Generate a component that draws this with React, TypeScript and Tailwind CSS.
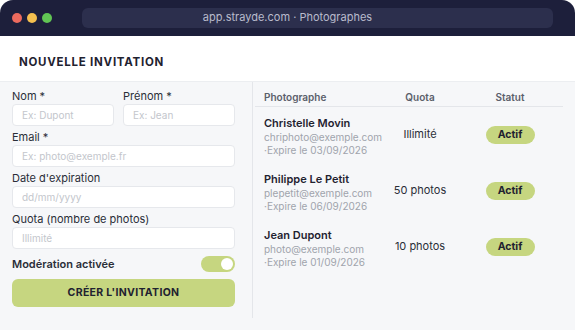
import React from "react";

const rows = [
  { name: "Christelle Movin", email: "chriphoto@exemple.com", exp: "·Expire le 03/09/2026", quota: "Illimité" },
  { name: "Philippe Le Petit", email: "plepetit@exemple.com", exp: "·Expire le 06/09/2026", quota: "50 photos" },
  { name: "Jean Dupont", email: "photo@exemple.com", exp: "·Expire le 01/09/2026", quota: "10 photos" },
];

function Field({ label, placeholder, className = "" }: { label: string; placeholder: string; className?: string }) {
  return (
    <div className={"flex flex-col " + className}>
      <div className="text-[11px] leading-[15px] text-[#2a2e38]">{label}</div>
      <div className="h-[22px] rounded-[4px] border border-[#e6e8ec] bg-white px-[9px] flex items-center text-[10px] text-[#c3c6cc]">
        {placeholder}
      </div>
    </div>
  );
}

export default function App() {
  return (
    <div className="w-[575px] h-[330px] bg-white overflow-hidden" style={{ fontFamily: "Inter, 'Noto Sans', sans-serif" }}>
      <div className="w-full h-full rounded-t-[13px] overflow-hidden flex flex-col bg-[#f6f7f9]">
        {/* Title bar */}
        <div className="h-[36px] shrink-0 bg-[#1d1f3b] flex items-center pl-[12px] pr-[22px] pb-[1px]">
          <div className="flex gap-[5px]">
            <div className="w-[10px] h-[10px] rounded-full bg-[#ec6a5e]" />
            <div className="w-[10px] h-[10px] rounded-full bg-[#f4bf4f]" />
            <div className="w-[10px] h-[10px] rounded-full bg-[#61c554]" />
          </div>
          <div className="ml-[30px] flex-1 h-[20px] rounded-[6px] bg-[#2c2f4d] flex items-center justify-center pr-[60px] text-[11px] text-[#b9bbcc]">
            app.strayde.com · Photographes
          </div>
        </div>
        {/* Header */}
        <div className="h-[46px] shrink-0 bg-white border-b border-[#eceef1] flex items-center pl-[19px] pt-[8px]">
          <div className="text-[11.5px] font-bold tracking-[0.065em] text-[#1f2230]">NOUVELLE INVITATION</div>
        </div>
        {/* Body */}
        <div className="flex-1 flex pb-[12px]">
          <div className="w-[253px] shrink-0 border-r border-[#e4e6ea] pl-[12px] pr-[17px] pt-[7px] flex flex-col">
            <div className="grid grid-cols-[102px_112px] gap-x-[9px]">
              <Field label="Nom *" placeholder="Ex: Dupont" />
              <Field label="Prénom *" placeholder="Ex: Jean" />
            </div>
            <Field className="mt-[4px]" label="Email *" placeholder="Ex: photo@exemple.fr" />
            <Field className="mt-[4px]" label="Date d'expiration" placeholder="dd/mm/yyyy" />
            <Field className="mt-[4px]" label="Quota (nombre de photos)" placeholder="Illimité" />
            <div className="mt-[7px] h-[16px] flex items-center justify-between">
              <div className="text-[11px] font-semibold text-[#2a2e38]">Modération activée</div>
              <div className="w-[34px] h-[16px] rounded-full bg-[#c6d680] flex items-center justify-end pr-[2px]">
                <div className="w-[12px] h-[12px] rounded-full bg-white" />
              </div>
            </div>
            <div className="mt-[7px] h-[28px] rounded-[6px] bg-[#c6d680] flex items-center justify-center text-[10.5px] font-bold tracking-[0.03em] text-[#1f2230]">
              CRÉER L'INVITATION
            </div>
          </div>
          <div className="flex-1 pl-[2px] pr-[12px] pt-[8px]">
            <div className="grid grid-cols-[120px_90px_90px] border-b border-[#e4e6ea] pb-[2px] text-[10px] font-semibold leading-[14px] text-[#5b606b]">
              <div className="pl-[9px]">Photographe</div>
              <div className="text-center">Quota</div>
              <div className="text-center">Statut</div>
            </div>
            {rows.map((r) => (
              <div key={r.name} className="grid grid-cols-[120px_90px_90px] items-center h-[56px]">
                <div className="pl-[9px] pt-[1px] flex flex-col whitespace-nowrap">
                  <div className="text-[11px] font-semibold leading-[15px] text-[#1f2230]">{r.name}</div>
                  <div className="text-[10px] leading-[13px] text-[#a0a4ac]">{r.email}</div>
                  <div className="text-[10px] leading-[12px] text-[#a0a4ac]">{r.exp}</div>
                </div>
                <div className="text-center text-[11px] text-[#2a2e38] pb-[1px]">{r.quota}</div>
                <div className="flex justify-center">
                  <div className="w-[49px] h-[18px] rounded-full bg-[#c6d680] flex items-center justify-center text-[10.5px] font-bold text-[#1f2230]">
                    Actif
                  </div>
                </div>
              </div>
            ))}
          </div>
        </div>
      </div>
    </div>
  );
}
